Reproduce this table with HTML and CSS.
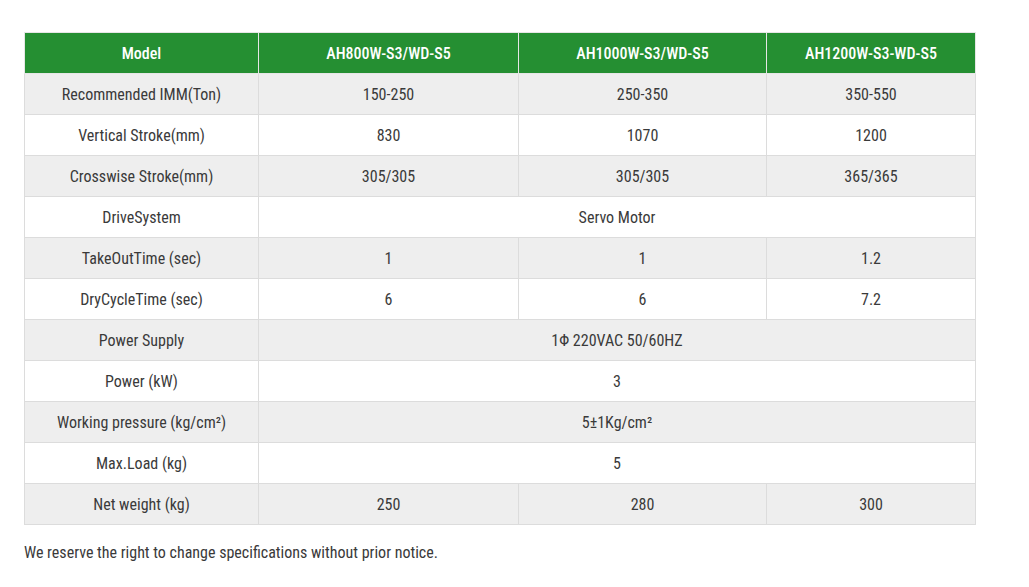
FILE: index.html
```html
<!DOCTYPE html>
<html>
<head>
<meta charset="utf-8">
<link rel="stylesheet" href="styles.css">
</head>
<body>
<div class="wrap">
<table class="spec">
<colgroup><col class="c1"><col class="c2"><col class="c3"><col class="c4"></colgroup>
<thead>
<tr><th>Model</th><th>AH800W-S3/WD-S5</th><th>AH1000W-S3/WD-S5</th><th>AH1200W-S3-WD-S5</th></tr>
</thead>
<tbody>
<tr><td>Recommended IMM(Ton)</td><td>150-250</td><td>250-350</td><td>350-550</td></tr>
<tr><td>Vertical Stroke(mm)</td><td>830</td><td>1070</td><td>1200</td></tr>
<tr><td>Crosswise Stroke(mm)</td><td>305/305</td><td>305/305</td><td>365/365</td></tr>
<tr><td>DriveSystem</td><td colspan="3">Servo Motor</td></tr>
<tr><td>TakeOutTime (sec)</td><td>1</td><td>1</td><td>1.2</td></tr>
<tr><td>DryCycleTime (sec)</td><td>6</td><td>6</td><td>7.2</td></tr>
<tr><td>Power Supply</td><td colspan="3">1Φ 220VAC 50/60HZ</td></tr>
<tr><td>Power (kW)</td><td colspan="3">3</td></tr>
<tr><td>Working pressure (kg/cm²)</td><td colspan="3">5±1Kg/cm²</td></tr>
<tr><td>Max.Load (kg)</td><td colspan="3">5</td></tr>
<tr><td>Net weight (kg)</td><td>250</td><td>280</td><td>300</td></tr>
</tbody>
</table>
<p class="note">We reserve the right to change specifications without prior notice.</p>
</div>
</body>
</html>
```
FILE: styles.css
```css
html, body { margin: 0; padding: 0; background: #fff; }
body { font-family: "Roboto Condensed", Roboto, "Liberation Sans", sans-serif; font-stretch: condensed; color: #3a3a3a; }
.wrap { padding: 32px 24px 0 24px; }
.spec { border-collapse: collapse; width: 951px; table-layout: fixed; font-size: 16px; }
.c1 { width: 234px; } .c2 { width: 260px; } .c3 { width: 248px; } .c4 { width: 209px; }
.spec th, .spec td { border: 1px solid #dcdcdc; text-align: center; height: 41px; padding: 0; box-sizing: border-box; }
.spec th { height: 41px; background: #258f32; color: #fff; font-weight: 500; border-color: #e6e6e6; }
.spec tbody tr:nth-child(odd) td { background: #eeeeee; }
.spec tbody tr:nth-child(even) td { background: #fff; }
.note { margin: 17px 0 0; font-size: 16px; line-height: 22px; color: #3a3a3a; }
```
